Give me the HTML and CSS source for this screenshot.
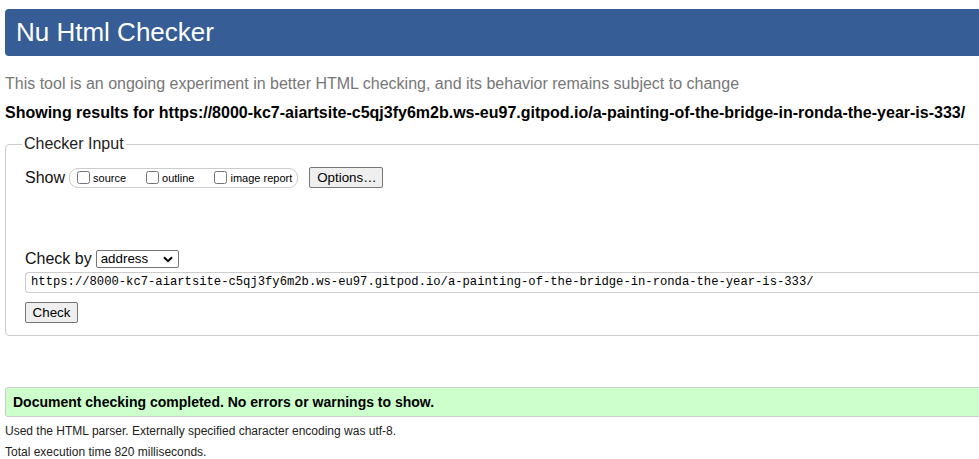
FILE: index.html
```html
<!DOCTYPE html>
<html lang="en">
<head>
<meta charset="utf-8">
<title>Nu Html Checker</title>
<link rel="stylesheet" href="styles.css">
</head>
<body>
<div class="page">
  <header class="masthead">
    <h1 class="title">Nu Html Checker</h1>
  </header>
  <p class="intro">This tool is an ongoing experiment in better HTML checking, and its behavior remains subject to change</p>
  <p class="showing">Showing results for https://8000-kc7-aiartsite-c5qj3fy6m2b.ws-eu97.gitpod.io/a-painting-of-the-bridge-in-ronda-the-year-is-333/</p>
  <fieldset class="checker">
    <legend class="checker-legend">Checker Input</legend>
    <div class="show-row">
      <span class="label">Show</span>
      <span class="show-group">
        <label class="opt"><input type="checkbox" class="cb"><span>source</span></label>
        <label class="opt"><input type="checkbox" class="cb"><span>outline</span></label>
        <label class="opt last"><input type="checkbox" class="cb"><span>image report</span></label>
      </span>
      <button class="btn options" type="button">Options…</button>
    </div>
    <div class="by-row">
      <span class="label">Check by</span>
      <span class="select">address<svg class="chev" viewBox="0 0 10 7" width="10" height="7"><path d="M1 1.2 L5 5.2 L9 1.2" fill="none" stroke="#000" stroke-width="2"/></svg></span>
    </div>
    <div class="url">https://8000-kc7-aiartsite-c5qj3fy6m2b.ws-eu97.gitpod.io/a-painting-of-the-bridge-in-ronda-the-year-is-333/</div>
    <div class="submit-row"><button class="btn check" type="button">Check</button></div>
  </fieldset>
  <div class="success">Document checking completed. No errors or warnings to show.</div>
  <p class="details">Used the HTML parser. Externally specified character encoding was utf-8.</p>
  <p class="details">Total execution time 820 milliseconds.</p>
</div>
</body>
</html>
```

FILE: styles.css
```css
html { overflow: hidden; }
body {
  margin: 0;
  font-family: "Liberation Sans", Arial, sans-serif;
  color: #000;
  background: #fff;
}
.page {
  width: 1100px;
  padding: 9px 0 0 5px;
}
.masthead {
  height: 47px;
  background: #365d95;
  border-radius: 4px;
  padding-left: 11px;
}
.title {
  margin: 0;
  font-size: 26px;
  font-weight: normal;
  line-height: 47px;
  color: #fff;
}
.intro {
  margin: 19px 0 0;
  font-size: 16px;
  line-height: 18px;
  color: #777;
}
.showing {
  margin: 11px 0 0;
  font-size: 16px;
  line-height: 18px;
  font-weight: bold;
}
.checker {
  margin: 13px 0 0;
  padding: 0 0 12px 19px;
  border: 1px solid #ccc;
  border-radius: 4px;
  min-width: 0;
}
.checker-legend {
  margin-left: -3px;
  padding: 0 2px;
  font-size: 16px;
  line-height: 18px;
  color: #222;
}
.label {
  font-size: 16px;
  line-height: 18px;
  color: #111;
}
.show-row {
  display: flex;
  align-items: center;
  height: 21px;
  margin-top: 14px;
}
.show-group {
  display: flex;
  align-items: center;
  margin-left: 4px;
  height: 18px;
  padding: 0 5px 0 7px;
  border: 1px solid #ccc;
  border-radius: 9px;
}
.opt {
  display: flex;
  align-items: center;
  font-size: 11px;
  margin-right: 20px;
  color: #000;
}
.opt.last { margin-right: 0; }
.cb {
  width: 13px;
  height: 13px;
  margin: 0 3px 0 0;
}
.btn {
  font-family: "Liberation Sans", Arial, sans-serif;
  font-size: 13.33px;
  line-height: 15px;
  color: #000;
  background: #efefef;
  border: 1px solid #767676;
  border-radius: 2px;
  padding: 2px 7px;
}
.options {
  margin-left: 11px;
  width: 74px;
  height: 21px;
}
.by-row {
  display: flex;
  align-items: center;
  margin-top: 62px;
  height: 18px;
}
.select {
  display: flex;
  align-items: center;
  justify-content: space-between;
  box-sizing: border-box;
  width: 83px;
  height: 18px;
  margin-left: 4px;
  padding: 0 5px 0 4px;
  border: 1px solid #767676;
  border-radius: 2px;
  font-size: 13.33px;
  line-height: 16px;
}
.chev { display: block; }
.url {
  margin-top: 4px;
  height: 19px;
  box-sizing: content-box;
  border: 1px solid #ccc;
  border-right: 0;
  border-radius: 4px 0 0 4px;
  padding-left: 5px;
  font-family: "Liberation Mono", "DejaVu Sans Mono", monospace;
  font-size: 12.2px;
  line-height: 19px;
  white-space: nowrap;
  color: #000;
}
.submit-row {
  margin-top: 9px;
  display: flex;
}
.check {
  width: 53px;
  height: 21px;
  padding: 2px 0;
}
.success {
  margin-top: 51px;
  border: 1px solid #ccc;
  border-radius: 3px;
  background: #ccffcc;
  padding: 6px 7px;
  font-size: 14px;
  line-height: 16px;
  font-weight: bold;
}
.details {
  margin: 7px 0 0;
  font-size: 12px;
  line-height: 14px;
  color: #222;
}
```
